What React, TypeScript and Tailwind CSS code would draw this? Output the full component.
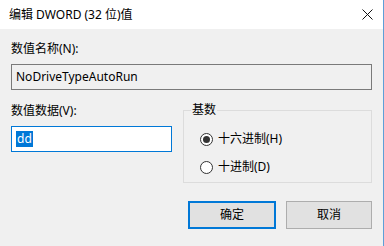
import React from 'react';

const font = 'font-["Noto_Sans","Noto_Sans_CJK_SC",sans-serif]';

const Radio = ({ checked, label }: { checked?: boolean; label: string }) => (
  <div className="flex items-center h-[16px]">
    <span className="w-[13px] h-[13px] rounded-full border border-[#333] bg-white flex items-center justify-center">
      {checked && <span className="w-[7px] h-[7px] rounded-full bg-[#333]" />}
    </span>
    <span className="ml-[5px] text-[12px] leading-[16px] text-black">{label}</span>
  </div>
);

const App = () => {
  return (
    <div className={`w-[384px] h-[246px] bg-[#f0f0f0] flex flex-col border-r border-[#5d9fd8] ${font}`}>
      <div className="h-[29px] bg-white flex items-center justify-between pl-[9px] pr-[10px]">
        <span className="text-[12px] leading-[16px] text-black">编辑 DWORD (32 位)值</span>
        <svg width="11" height="11" viewBox="0 0 11 11" className="mr-[0px]">
          <path d="M0.5 0.5 L10.5 10.5 M10.5 0.5 L0.5 10.5" stroke="#111" strokeWidth="1" />
        </svg>
      </div>

      <div className="flex flex-col px-[11px] pt-[12px] pr-[11px]">
        <div className="text-[12px] leading-[16px] text-black">数值名称(N):</div>
        <div className="mt-[7px] h-[26px] border border-[#7a7a7a] bg-[#f0f0f0] flex items-center px-[4px] text-[12px] text-black">
          NoDriveTypeAutoRun
        </div>

        <div className="flex mt-[13px]">
          <div className="flex flex-col w-[161px]">
            <div className="text-[12px] leading-[16px] text-black">数值数据(V):</div>
            <div className="mt-[7px] h-[26px] border border-[#0078d7] bg-white flex items-center px-[4px]">
              <span className="bg-[#0078d7] text-white text-[12px] leading-[16px] px-[1px]">dd</span>
            </div>
          </div>

          <div className="ml-auto mt-[7px] w-[189px] h-[73px] border border-[#dcdcdc] relative flex flex-col pl-[16px] pt-[20px] gap-[12px]">
            <span className="absolute -top-[9px] left-[7px] px-[1px] bg-[#f0f0f0] text-[12px] leading-[16px] text-black">
              基数
            </span>
            <Radio checked label="十六进制(H)" />
            <Radio label="十进制(D)" />
          </div>
        </div>

        <div className="flex justify-end gap-[10px] mt-[18px]">
          <button className="w-[88px] h-[28px] border-2 border-[#0078d7] bg-[#e1e1e1] text-[12px] text-black">
            确定
          </button>
          <button className="w-[86px] h-[28px] border border-[#adadad] bg-[#e1e1e1] text-[12px] text-black">
            取消
          </button>
        </div>
      </div>
    </div>
  );
};

export default App;
